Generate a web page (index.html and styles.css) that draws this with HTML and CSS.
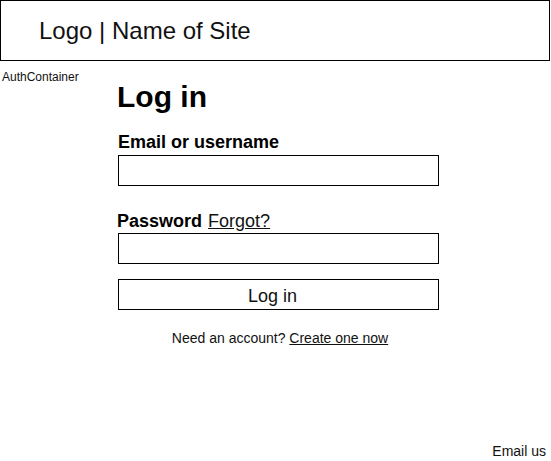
FILE: index.html
```html
<!DOCTYPE html>
<html lang="en">
<head>
  <meta charset="UTF-8" />
  <meta name="viewport" content="width=device-width, initial-scale=1.0" />
  <title>Log in</title>
  <link rel="stylesheet" href="styles.css">
</head>
<body>
  <header class="site-header">
    <span class="site-title">Logo | Name of Site</span>
  </header>

  <main class="auth-container">
    <div class="auth-tag">AuthContainer</div>
    <form class="auth-form">
      <h1>Log in</h1>
      <label class="field-label" for="email">Email or username</label>
      <input class="field" id="email" type="text" />

      <div class="password-row">
        <label class="field-label" for="password">Password</label>
        <a href="#" class="forgot">Forgot?</a>
      </div>
      <input class="field" id="password" type="password" />

      <button type="submit" class="submit">Log in</button>

      <p class="signup">Need an account? <a href="#">Create one now</a></p>
    </form>
  </main>

  <footer class="site-footer">Email us</footer>
</body>
</html>
```

FILE: styles.css
```css
* {
  box-sizing: border-box;
}
body {
  margin: 0;
  min-height: 461px;
  display: flex;
  flex-direction: column;
  font-family: "Liberation Sans", Arial, sans-serif;
  color: #000;
  background: #fff;
}
.site-header {
  width: 550px;
  height: 61px;
  border: 1px solid #000;
  display: flex;
  align-items: center;
  padding-left: 38px;
}
.site-title {
  font-size: 24px;
  color: #111;
}
.auth-container {
  flex: 1;
}
.auth-tag {
  font-size: 12px;
  line-height: 14px;
  padding: 9px 0 0 2px;
  color: #111;
}
.auth-form {
  width: 321px;
  margin-left: 117px;
  display: flex;
  flex-direction: column;
}
.auth-form h1 {
  font-size: 30px;
  margin: -2px 0 0 0;
  line-height: 30px;
}
.field-label {
  font-size: 18px;
  font-weight: bold;
  padding-left: 1px;
}
.auth-form > .field-label {
  margin-top: 20px;
  line-height: 20px;
}
.field {
  margin: 3px 0 0 1px;
  width: 321px;
  height: 31px;
  border: 1px solid #000;
  border-radius: 0;
  font-size: 16px;
  padding: 0 4px;
}
.password-row {
  margin-top: 25px;
  display: flex;
  gap: 6px;
  align-items: baseline;
  line-height: 20px;
}
.password-row + .field {
  margin-top: 2px;
}
.password-row .field-label {
  padding-left: 0;
}
.forgot {
  font-size: 18px;
  color: #111;
}
.submit {
  margin: 15px 0 0 1px;
  width: 321px;
  height: 31px;
  border: 1px solid #000;
  border-radius: 0;
  background: #fff;
  padding: 3px 12px 0 0;
  font-family: inherit;
  font-size: 18px;
  color: #111;
  cursor: pointer;
}
.signup {
  font-size: 14px;
  line-height: 16px;
  text-align: center;
  margin: 20px 0 0 0;
  padding-left: 5px;
  color: #111;
}
.signup a {
  color: #111;
}
.site-footer {
  font-size: 14px;
  text-align: right;
  padding: 0 5px 2px 0;
  color: #111;
}
```
